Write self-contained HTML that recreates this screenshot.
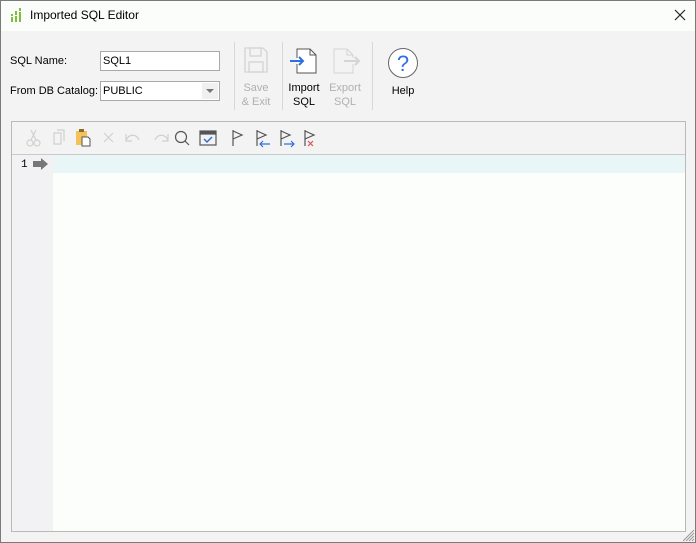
<!DOCTYPE html>
<html><head><style>
*{margin:0;padding:0;box-sizing:border-box}
body{width:696px;height:543px;overflow:hidden;font-family:"Liberation Sans",sans-serif;font-size:11px;color:#000;background:#f2f3f2}
.win{position:absolute;left:0;top:0;width:696px;height:543px;background:#f2f3f2}
.bord{position:absolute;left:0;top:0;width:696px;height:543px;border:1px solid #7a7a7a;pointer-events:none}
.title{position:absolute;left:0;top:0;width:696px;height:31px;background:#fbfdfb}
.ttext{position:absolute;left:30px;top:8px;font-size:12px}
.lbl{position:absolute;font-size:11px}
.inp{position:absolute;border:1px solid #a9a9a9;background:#fff;height:20px;padding:3px 2px;font-size:11px}
.sep{position:absolute;top:42px;width:1px;height:68px;background:#d8d8d8}
.btxt{position:absolute;text-align:center;font-size:11px;line-height:14px}
.dis{color:#b0b0b0}
.ed{position:absolute;left:11px;top:121px;width:675px;height:411px;border:1px solid #b9b9b9;background:#fbfefb}
.tb{position:absolute;left:0;top:0;width:673px;height:33px;background:#f2f3f2;border-bottom:1px solid #c9c9c9}
.gut{position:absolute;left:0;top:33px;width:41px;height:376px;background:#f2f1f4}
.hl{position:absolute;left:41px;top:33px;width:632px;height:18px;background:#e8f6f8}
</style></head><body>
<div class="win">
<div class="title">
<svg style="position:absolute;left:10px;top:8px" width="14" height="15"><g fill="#7cbf3a"><rect x="1" y="6" width="2" height="2"/><rect x="1" y="9" width="2" height="5"/><rect x="5" y="3" width="2" height="4"/><rect x="5" y="8" width="2" height="6"/><rect x="9" y="0" width="2" height="3"/><rect x="9" y="4" width="2" height="10"/></g></svg>
<div class="ttext">Imported SQL Editor</div>
<svg style="position:absolute;left:674px;top:9px" width="12" height="12"><path d="M1 1L11 11M11 1L1 11" stroke="#222" stroke-width="1.2"/></svg>
</div>
<div class="lbl" style="left:10px;top:55px">SQL Name:</div>
<div class="inp" style="left:100px;top:51px;width:120px">SQL1</div>
<div class="lbl" style="left:10px;top:85px">From DB Catalog:</div>
<div class="inp" style="left:100px;top:81px;width:120px">PUBLIC<div style="position:absolute;right:1px;top:1px;width:16px;height:16px;background:#f0f0f0"></div><svg style="position:absolute;right:5px;top:7px" width="8" height="5"><path d="M0 0H8L4 4Z" fill="#777"/></svg></div>
<div class="sep" style="left:234px"></div>
<div class="sep" style="left:282px"></div>
<div class="sep" style="left:372px"></div>
<svg style="position:absolute;left:244px;top:47px" width="24" height="26"><g fill="none" stroke="#d4d4d4" stroke-width="1.3"><path d="M1 1H19L23 5V25H1Z"/><rect x="6" y="1" width="11" height="8"/><rect x="5" y="15" width="14" height="10"/></g></svg>
<div class="btxt dis" style="left:236px;top:81px;width:40px">Save<br>&amp; Exit</div>
<svg style="position:absolute;left:290px;top:48px" width="28" height="26"><path d="M7 10V1H20L26 7V25H7V16" fill="#fff" stroke="#555" stroke-width="1"/><path d="M20 1V7H26" fill="none" stroke="#555"/><path d="M0 13H13M9 9L13 13L9 17" fill="none" stroke="#2f6fe0" stroke-width="2"/></svg>
<div class="btxt" style="left:284px;top:81px;width:40px">Import<br>SQL</div>
<svg style="position:absolute;left:333px;top:48px" width="28" height="26"><path d="M20 10V7L14 1H1V25H20V16" fill="none" stroke="#d4d4d4"/><path d="M14 1V7H20" fill="none" stroke="#d4d4d4"/><path d="M11 13H26M22 9L26 13L22 17" fill="none" stroke="#d4d4d4" stroke-width="2"/></svg>
<div class="btxt dis" style="left:325px;top:81px;width:40px">Export<br>SQL</div>
<svg style="position:absolute;left:387px;top:47px" width="32" height="32"><circle cx="16" cy="16" r="14.5" fill="#fff" stroke="#666"/><text x="16" y="24" text-anchor="middle" font-family="Liberation Sans" font-size="22" fill="#2f6fe0">?</text></svg>
<div class="btxt" style="left:383px;top:84px;width:40px">Help</div>
<div class="ed">
<div class="tb">
<svg width="320" height="33" style="position:absolute;left:0;top:0"><g fill="none" stroke-width="1.2">
<g stroke="#d0d0d0"><circle cx="18" cy="21" r="3"/><circle cx="25" cy="21" r="3"/><path d="M19 18L24 8M24 18L19 8"/>
<path d="M42 11h7v11h-7zM45 8h7v11"/>
<path d="M92 11l9 9M101 11l-9 9"/>
<path d="M114 12v7h6M114 19c2-7 10-8 13 -1"/><path d="M156 12v7h-6M156 19c-2-7-10-8-13-1"/></g>
<rect x="64" y="9" width="11" height="14" fill="#f3c35a" stroke="none"/>
<rect x="67" y="7" width="5" height="3" fill="#8a6a30" stroke="none"/>
<path d="M70 15h6l2 2v7h-8z" fill="#fff" stroke="#555" stroke-width="1"/>
<g stroke="#555"><circle cx="169" cy="15" r="5.5"/><path d="M173 19l4 4"/>
<rect x="188" y="9" width="16" height="14"/><path d="M188 12h16"/>
<path d="M221 8v16M221 9l9 4-9 4"/><path d="M245 8v16M245 9l9 4-9 4"/><path d="M269 8v16M269 9l9 4-9 4"/></g>
<path d="M188 9h16v3h-16z" fill="#555" stroke="none"/>
<path d="M192 17l3 3 5-5" stroke="#2f6fe0" stroke-width="1.5"/>
<g stroke="#2f6fe0"><path d="M248 22h10M251 19l-3 3 3 3"/><path d="M272 22h10M279 19l3 3-3 3"/></g>
<g stroke="#e05050"><path d="M296 19l5 5M301 19l-5 5"/></g>
<path d="M293 8v16M293 9l9 4-9 4" stroke="#555"/>
</g></svg>
</div>
<div class="gut"></div>
<div class="hl"></div>
<div style="position:absolute;left:9px;top:37px;font-family:'Liberation Mono',monospace;font-size:11px">1</div>
<svg style="position:absolute;left:21px;top:36px" width="16" height="12"><path d="M0 3h8V0l7 6-7 6V9H0z" fill="#777"/></svg>
</div>
<svg style="position:absolute;left:683px;top:530px" width="12" height="12"><path d="M11 3L3 11M11 6L6 11M11 9L9 11M11 0L0 11" stroke="#999"/></svg>
</div>
<div class="bord"></div>
</body></html>
